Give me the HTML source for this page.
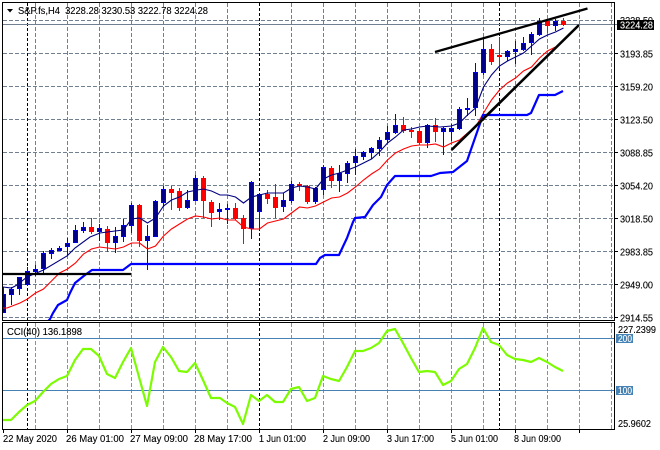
<!DOCTYPE html>
<html><head><meta charset="utf-8"><title>S&amp;P.fs,H4</title>
<style>
html,body{margin:0;padding:0;background:#fff;width:660px;height:450px;overflow:hidden}
svg{display:block}
text{font-family:"Liberation Sans",sans-serif;font-size:10.5px;fill:#000;stroke:#000;stroke-width:.12px}
text.w{fill:#fff;stroke:#fff}
</style></head><body>
<svg width="660" height="450" viewBox="0 0 660 450" xmlns="http://www.w3.org/2000/svg">
<defs>
<clipPath id="m"><rect x="3" y="3" width="611" height="317"/></clipPath>
<clipPath id="c"><rect x="3" y="323" width="611" height="106"/></clipPath>
</defs>
<rect width="660" height="450" fill="#fff"/>
<!-- main grid -->
<g stroke="#708090" fill="none" stroke-dasharray="4 2">
<path clip-path="url(#m)" d="M3 20.5H614M3 53.5H614M3 86.5H614M3 119.5H614M3 152.5H614M3 185.5H614M3 218.5H614M3 251.5H614M3 284.5H614M3 317.5H614M35.5 3V320M67.5 3V320M99.5 3V320M131.5 3V320M163.5 3V320M195.5 3V320M227.5 3V320M291.5 3V320M323.5 3V320M355.5 3V320M387.5 3V320M419.5 3V320M451.5 3V320M483.5 3V320M515.5 3V320M547.5 3V320M579.5 3V320M611.5 3V320"/>
<path d="M35.5 323V429M67.5 323V429M99.5 323V429M131.5 323V429M163.5 323V429M195.5 323V429M227.5 323V429M291.5 323V429M323.5 323V429M355.5 323V429M387.5 323V429M419.5 323V429M451.5 323V429M483.5 323V429M515.5 323V429M547.5 323V429M579.5 323V429M611.5 323V429" stroke-opacity=".85"/>
</g>
<g stroke="#000" fill="none" stroke-dasharray="3 2">
<path d="M27.5 3V320M259.5 3V320M499.5 3V320M27.5 323V429M259.5 323V429M499.5 323V429"/>
</g>
<path d="M3 24.5H620" stroke="#708090" fill="none"/>
<!-- candles -->
<g clip-path="url(#m)">
<path fill="none" stroke="#0000ff" d="M3.5 287V313M11.5 287V305M19.5 277V295M27.5 267V286M35.5 265V276M43.5 251V275M51.5 248V259M59.5 246V251M67.5 238V255M75.5 225V243M83.5 222V233M99.5 224V241M115.5 227V253M123.5 219V242M131.5 203V233M147.5 225V270M155.5 200V237M163.5 186V207M187.5 190V209M195.5 175V201M219.5 203V220M227.5 204V224M251.5 181V239M259.5 193V230M283.5 193V212M291.5 181V203M315.5 187V204M323.5 165V195M339.5 165V192M347.5 161V183M355.5 149V175M363.5 151V160M371.5 147V159M379.5 137V156M387.5 126V143M395.5 114V134M427.5 124V148M443.5 127V155M451.5 124V141M459.5 107V130M467.5 98V116M475.5 63V116M483.5 37V75M507.5 50V61M515.5 41V64M523.5 37V51M531.5 32V55M539.5 18V36M555.5 19V31"/>
<path fill="#00008b" stroke="#0000e6" d="M1.5 294.5h4v18h-4zM9.5 289.5h4v5h-4zM17.5 277.5h4v11h-4zM25.5 271.5h4v13h-4zM33.5 269.5h4v2h-4zM41.5 253.5h4v15h-4zM49.5 250.5h4v3h-4zM57.5 248.5h4v2h-4zM65.5 243.5h4v3h-4zM73.5 230.5h4v12h-4zM81.5 227.5h4v3h-4zM97.5 228.5h4v3h-4zM113.5 236.5h4v6h-4zM121.5 225.5h4v11h-4zM129.5 205.5h4v20h-4zM145.5 236.5h4v4h-4zM153.5 201.5h4v35h-4zM161.5 189.5h4v13h-4zM185.5 200.5h4v7h-4zM193.5 178.5h4v22h-4zM217.5 209.5h4v2h-4zM225.5 208.5h4v1h-4zM249.5 182.5h4v46h-4zM257.5 194.5h4v17h-4zM281.5 200.5h4v6h-4zM289.5 184.5h4v16h-4zM313.5 188.5h4v13h-4zM321.5 167.5h4v22h-4zM337.5 173.5h4v7h-4zM345.5 163.5h4v10h-4zM353.5 156.5h4v6h-4zM361.5 152.5h4v4h-4zM369.5 148.5h4v4h-4zM377.5 140.5h4v8h-4zM385.5 132.5h4v7h-4zM393.5 125.5h4v7h-4zM425.5 125.5h4v17h-4zM441.5 128.5h4v3h-4zM449.5 128.5h4v3h-4zM457.5 109.5h4v19h-4zM465.5 108.5h4v1h-4zM473.5 72.5h4v35h-4zM481.5 49.5h4v23h-4zM505.5 51.5h4v5h-4zM513.5 49.5h4v2h-4zM521.5 43.5h4v6h-4zM529.5 34.5h4v8h-4zM537.5 21.5h4v13h-4zM553.5 21.5h4v4h-4z"/>
<path fill="none" stroke="#ff0000" d="M91.5 218V234M107.5 226V252M139.5 204V247M171.5 186V210M179.5 188V211M203.5 176V218M211.5 200V227M235.5 203V220M243.5 215V244M267.5 190V204M275.5 184V218M299.5 182V191M307.5 185V204M331.5 166V188M403.5 117V133M411.5 127V138M419.5 128V145M435.5 118V142M491.5 44V65M499.5 37V68M547.5 19V33M563.5 18V26"/>
<path fill="#ff0000" stroke="#ff0000" d="M89.5 227.5h4v4h-4zM105.5 229.5h4v13h-4zM137.5 205.5h4v35h-4zM169.5 189.5h4v3h-4zM177.5 191.5h4v16h-4zM201.5 178.5h4v22h-4zM209.5 202.5h4v10h-4zM233.5 208.5h4v10h-4zM241.5 218.5h4v10h-4zM265.5 194.5h4v4h-4zM273.5 197.5h4v10h-4zM297.5 184.5h4v1h-4zM305.5 186.5h4v15h-4zM329.5 168.5h4v12h-4zM401.5 125.5h4v5h-4zM409.5 130.5h4v1h-4zM417.5 131.5h4v11h-4zM433.5 125.5h4v6h-4zM489.5 49.5h4v12h-4zM497.5 55.5h4v1h-4zM545.5 21.5h4v4h-4zM561.5 21.5h4v3h-4z"/>
<!-- moving averages -->
<path fill="none" stroke="#000080" stroke-width="1.1" d="M3 287L11.5 288L17 285L27 277L43.5 270L67 256L75 248L90 237L100 233L115 231L123.5 230L131.5 219L139.5 218L147.5 223L155.5 218L163.5 206L171.5 200L179.5 197L187.5 192L197 190L203.5 189L211.5 191L220 195L227.5 195L235.5 197L243.5 203L251.5 197L259.5 195L267.5 193L283.5 193L291.5 188L299.5 186L307.5 187L315.5 189L323.5 179L331.5 175L339.5 173L347.5 170L355.5 167L363.5 163L371.5 159L379.5 152L387.5 143L395.5 137L403.5 130L411.5 129L419.5 127L427.5 126L440 127L451.5 126L459.5 123L467.5 115L475.5 108L483.5 87L491.5 75L499.5 66L507.5 61L515.5 57L523.5 53L531.5 46L539.5 39L547.5 35L555.5 32L563.5 28"/>
<path fill="none" stroke="#ff0000" stroke-width="1.1" d="M3 308L7 308L20 303L27.5 299L35.5 293L43.5 289L51.5 281L59.5 273L67.5 269L75.5 263L83.5 254L91.5 249L99.5 247L107.5 248L115.5 249L123.5 247L131.5 243L139.5 243L147.5 249L155.5 246L163.5 236L171.5 229L179.5 224L187.5 219L195.5 216L203.5 217L211.5 219L220 218L227.5 220L235.5 220L243.5 227L251.5 229L259.5 229L267.5 223L275.5 221L283.5 219L291.5 213L299.5 207L307.5 208L315.5 206L323.5 202L331.5 198L339.5 197L347.5 193L355.5 187L363.5 180L371.5 174L379.5 169L387.5 160L395.5 153L403.5 149L411.5 146L419.5 145L427.5 145L435.5 144L443.5 147L451.5 143L459.5 140L467.5 133L475.5 127L483.5 113L491.5 100L499.5 90L507.5 83L515.5 78L523.5 71L531.5 67L539.5 58L547.5 51L555.5 47"/>
<!-- thick indicator -->
<path fill="none" stroke="#0000ff" stroke-width="2.2" stroke-linejoin="round" d="M45 325L50 319L53 313L58 305L67 300L70 293L75 283L80 279L85 275L92 270L123 270L131 264L316 264L320 258L325 255L339 255L347 238L353 222L355 218L365 217L373 205L381 197L387 185L395 176L431 176L440 173L453 172L467 161L483 115L527 115L531 113L539 95L555 95L563 91"/>
<!-- black trend lines -->
<g fill="none" stroke="#000" stroke-width="2.3">
<path d="M3 274H131" stroke-width="2.2"/>
<path d="M435 52L587.5 8.5"/>
<path stroke-width="2.6" d="M451.5 150L579 25"/>
</g>
</g>
<!-- cci -->
<path d="M3 338.5H614M3 390.5H614" stroke="#4682b4" fill="none"/>
<path clip-path="url(#c)" fill="none" stroke="#7cfc00" stroke-width="2.2" stroke-linejoin="round" d="M3 420L11 420L19 412L27 405L35 401L43 392L51 384L59 379L67 376L75 360L83 349L91 349L99 356L107 374L115 378L123 362L131 348L139 377L147 406L155 362L163 347L171 357L179 371L187 372L195 363L203 380L211 398L220 398L227 403L235 407L243 424L251 395L259 401L267 395L275 402L283 402L291 389L299 387L307 401L315 398L323 376L331 379L339 381L347 367L355 351L363 351L371 348L379 343L387 331L395 329L403 343L411 358L419 372L427 371L435 372L440 380L443 385L451 381L459 369L467 364L475 348L483 328L491 342L499 345L507 355L515 359L523 360L531 362L539 358L547 362L555 367L563 371"/>
<!-- frames -->
<g stroke="#000" fill="none">
<path d="M2.5 2V320.5M2 2.5H615M614.5 2V320.5M2 320.5H615"/>
<path d="M2.5 322V429.5M2 322.5H615M614.5 322V429.5M2 429.5H615"/>
<path d="M3.5 429V433M67.5 429V433M131.5 429V433M195.5 429V433M259.5 429V433M323.5 429V433M387.5 429V433M451.5 429V433M515.5 429V433M579.5 429V433"/>
<path d="M615 53.5h3M615 86.5h3M615 119.5h3M615 152.5h3M615 185.5h3M615 218.5h3M615 251.5h3M615 284.5h3M615 317.5h3"/>
</g>
<!-- header -->
<path d="M7 9h6l-3 3.5z" fill="#000"/>
<text x="18" y="14" textLength="190" lengthAdjust="spacingAndGlyphs" xml:space="preserve">S&amp;P.fs,H4  3228.28 3230.53 3222.78 3224.28</text>
<!-- price labels -->
<text x="620" y="24" textLength="33" lengthAdjust="spacingAndGlyphs">3228.50</text>
<rect x="617" y="20" width="37" height="10" fill="#000"/>
<text class="w" x="620" y="28.5" textLength="33" lengthAdjust="spacingAndGlyphs">3224.28</text>
<text x="620" y="57.5" textLength="33" lengthAdjust="spacingAndGlyphs">3193.85</text>
<text x="620" y="90.5" textLength="33" lengthAdjust="spacingAndGlyphs">3159.20</text>
<text x="620" y="123.5" textLength="33" lengthAdjust="spacingAndGlyphs">3123.50</text>
<text x="620" y="156.5" textLength="33" lengthAdjust="spacingAndGlyphs">3088.85</text>
<text x="620" y="189.5" textLength="33" lengthAdjust="spacingAndGlyphs">3054.20</text>
<text x="620" y="222.5" textLength="33" lengthAdjust="spacingAndGlyphs">3018.50</text>
<text x="620" y="255.5" textLength="33" lengthAdjust="spacingAndGlyphs">2983.85</text>
<text x="620" y="288.5" textLength="33" lengthAdjust="spacingAndGlyphs">2949.00</text>
<text x="620" y="321.5" textLength="33" lengthAdjust="spacingAndGlyphs">2914.55</text>
<!-- cci labels -->
<text x="7" y="335" textLength="75" lengthAdjust="spacingAndGlyphs">CCI(40) 136.1898</text>
<text x="618" y="333" textLength="38" lengthAdjust="spacingAndGlyphs">227.2399</text>
<rect x="616" y="334" width="17" height="9" fill="#4682b4"/>
<text class="w" x="618" y="342" textLength="14" lengthAdjust="spacingAndGlyphs">200</text>
<rect x="616" y="386" width="17" height="9" fill="#4682b4"/>
<text class="w" x="618" y="394" textLength="14" lengthAdjust="spacingAndGlyphs">100</text>
<text x="618" y="427" textLength="33" lengthAdjust="spacingAndGlyphs">25.9602</text>
<!-- time labels -->
<text x="3" y="442" textLength="54" lengthAdjust="spacingAndGlyphs">22 May 2020</text>
<text x="66" y="442" textLength="58" lengthAdjust="spacingAndGlyphs">26 May 01:00</text>
<text x="130" y="442" textLength="58" lengthAdjust="spacingAndGlyphs">27 May 09:00</text>
<text x="194" y="442" textLength="58" lengthAdjust="spacingAndGlyphs">28 May 17:00</text>
<text x="259" y="442" textLength="47" lengthAdjust="spacingAndGlyphs">1 Jun 01:00</text>
<text x="323" y="442" textLength="47" lengthAdjust="spacingAndGlyphs">2 Jun 09:00</text>
<text x="387" y="442" textLength="47" lengthAdjust="spacingAndGlyphs">3 Jun 17:00</text>
<text x="451" y="442" textLength="47" lengthAdjust="spacingAndGlyphs">5 Jun 01:00</text>
<text x="514" y="442" textLength="47" lengthAdjust="spacingAndGlyphs">8 Jun 09:00</text>
</svg>
</body></html>
